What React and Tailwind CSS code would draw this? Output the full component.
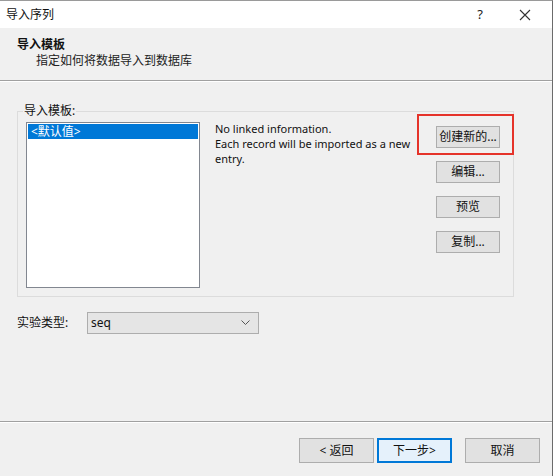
export default function App() {
  const font = { fontFamily: '"Noto Sans", "Noto Sans CJK SC", sans-serif' };
  const btn =
    "h-[22px] w-[64px] border border-[#adadad] bg-[#e1e1e1] text-[12px] text-[#111] flex items-center justify-center leading-none";
  return (
    <div
      className="w-[553px] h-[476px] bg-[#f0f0f0] flex flex-col overflow-hidden relative border-r border-[#6b6b6b] border-t border-t-[#9a9a9a]"
      style={font}
    >
      {/* title bar */}
      <div className="h-[27px] bg-white flex items-center shrink-0">
        <span className="ml-[6px] text-[12px] text-[#111]">导入序列</span>
        <span className="ml-auto mr-[36px] text-[13px] text-[#222]">?</span>
        <svg width="12" height="12" viewBox="0 0 12 12" className="mr-[21px]">
          <path d="M1 1 L11 11 M11 1 L1 11" stroke="#333" strokeWidth="1.1" />
        </svg>
      </div>
      {/* header */}
      <div className="h-[53px] shrink-0 border-b border-[#a0a0a0] pt-[9px] pl-[17px]">
        <div className="text-[12px] font-bold text-[#111] leading-[16px]">导入模板</div>
        <div className="text-[12px] text-[#222] leading-[16px] pl-[19px]">指定如何将数据导入到数据库</div>
      </div>
      <div className="h-px bg-white shrink-0" />
      {/* body */}
      <div className="flex-1 flex flex-col pl-[17px] pr-[38px]">
        <fieldset className="mt-[22px] h-[193px] border border-[#dcdcdc] pl-[8px] pr-[0px] m-0 p-0 relative">
          <legend className="ml-[-3px] px-[1px] text-[12px] text-[#111] leading-[14px]">导入模板:</legend>
          <div className="flex">
            <div className="mt-[4px] w-[174px] h-[166px] border border-[#828790] bg-white p-px">
              <div className="h-[15px] bg-[#0078d7] text-white text-[12px] leading-[15px] pl-[3px]">&lt;默认值&gt;</div>
            </div>
            <div className="ml-[15px] mt-[3px] w-[200px] text-[11px] leading-[15px] text-[#111]">
              <div>No linked information.</div>
              <div>Each record will be imported as a new entry.</div>
            </div>
            <div className="relative ml-[21px] flex flex-col gap-[13px] mt-[8px]">
              <div className={btn}>创建新的...</div>
              <div className={btn}>编辑...</div>
              <div className={btn}>预览</div>
              <div className={btn}>复制...</div>
              <div className="absolute left-[-19px] top-[-12px] w-[97px] h-[41px] border-2 border-[#e5332a]" />
            </div>
          </div>
        </fieldset>
        <div className="mt-[15px] flex items-center">
          <span className="text-[12px] text-[#111] w-[70px]">实验类型:</span>
          <div className="w-[172px] h-[22px] border border-[#adadad] bg-[#e5e5e5] flex items-center pl-[3px] pr-[8px]">
            <span className="text-[12px] text-[#111]">seq</span>
            <svg width="9" height="6" viewBox="0 0 9 6" className="ml-auto">
              <path d="M0.5 0.5 L4.5 4.5 L8.5 0.5" fill="none" stroke="#555" strokeWidth="1" />
            </svg>
          </div>
        </div>
      </div>
      {/* footer */}
      <div className="h-px bg-[#a0a0a0] shrink-0" />
      <div className="h-px bg-white shrink-0" />
      <div className="h-[53px] shrink-0 flex items-start pt-[15px] pl-[299px]">
        <div className="h-[25px] w-[75px] border border-[#adadad] bg-[#e1e1e1] text-[12px] text-[#111] flex items-center justify-center">&lt; 返回</div>
        <div className="ml-[3px] h-[25px] w-[75px] border-2 border-[#0078d7] bg-[#e5f1fb] text-[12px] text-[#111] flex items-center justify-center">下一步&gt;</div>
        <div className="ml-[13px] h-[25px] w-[75px] border border-[#adadad] bg-[#e1e1e1] text-[12px] text-[#111] flex items-center justify-center">取消</div>
      </div>
    </div>
  );
}
